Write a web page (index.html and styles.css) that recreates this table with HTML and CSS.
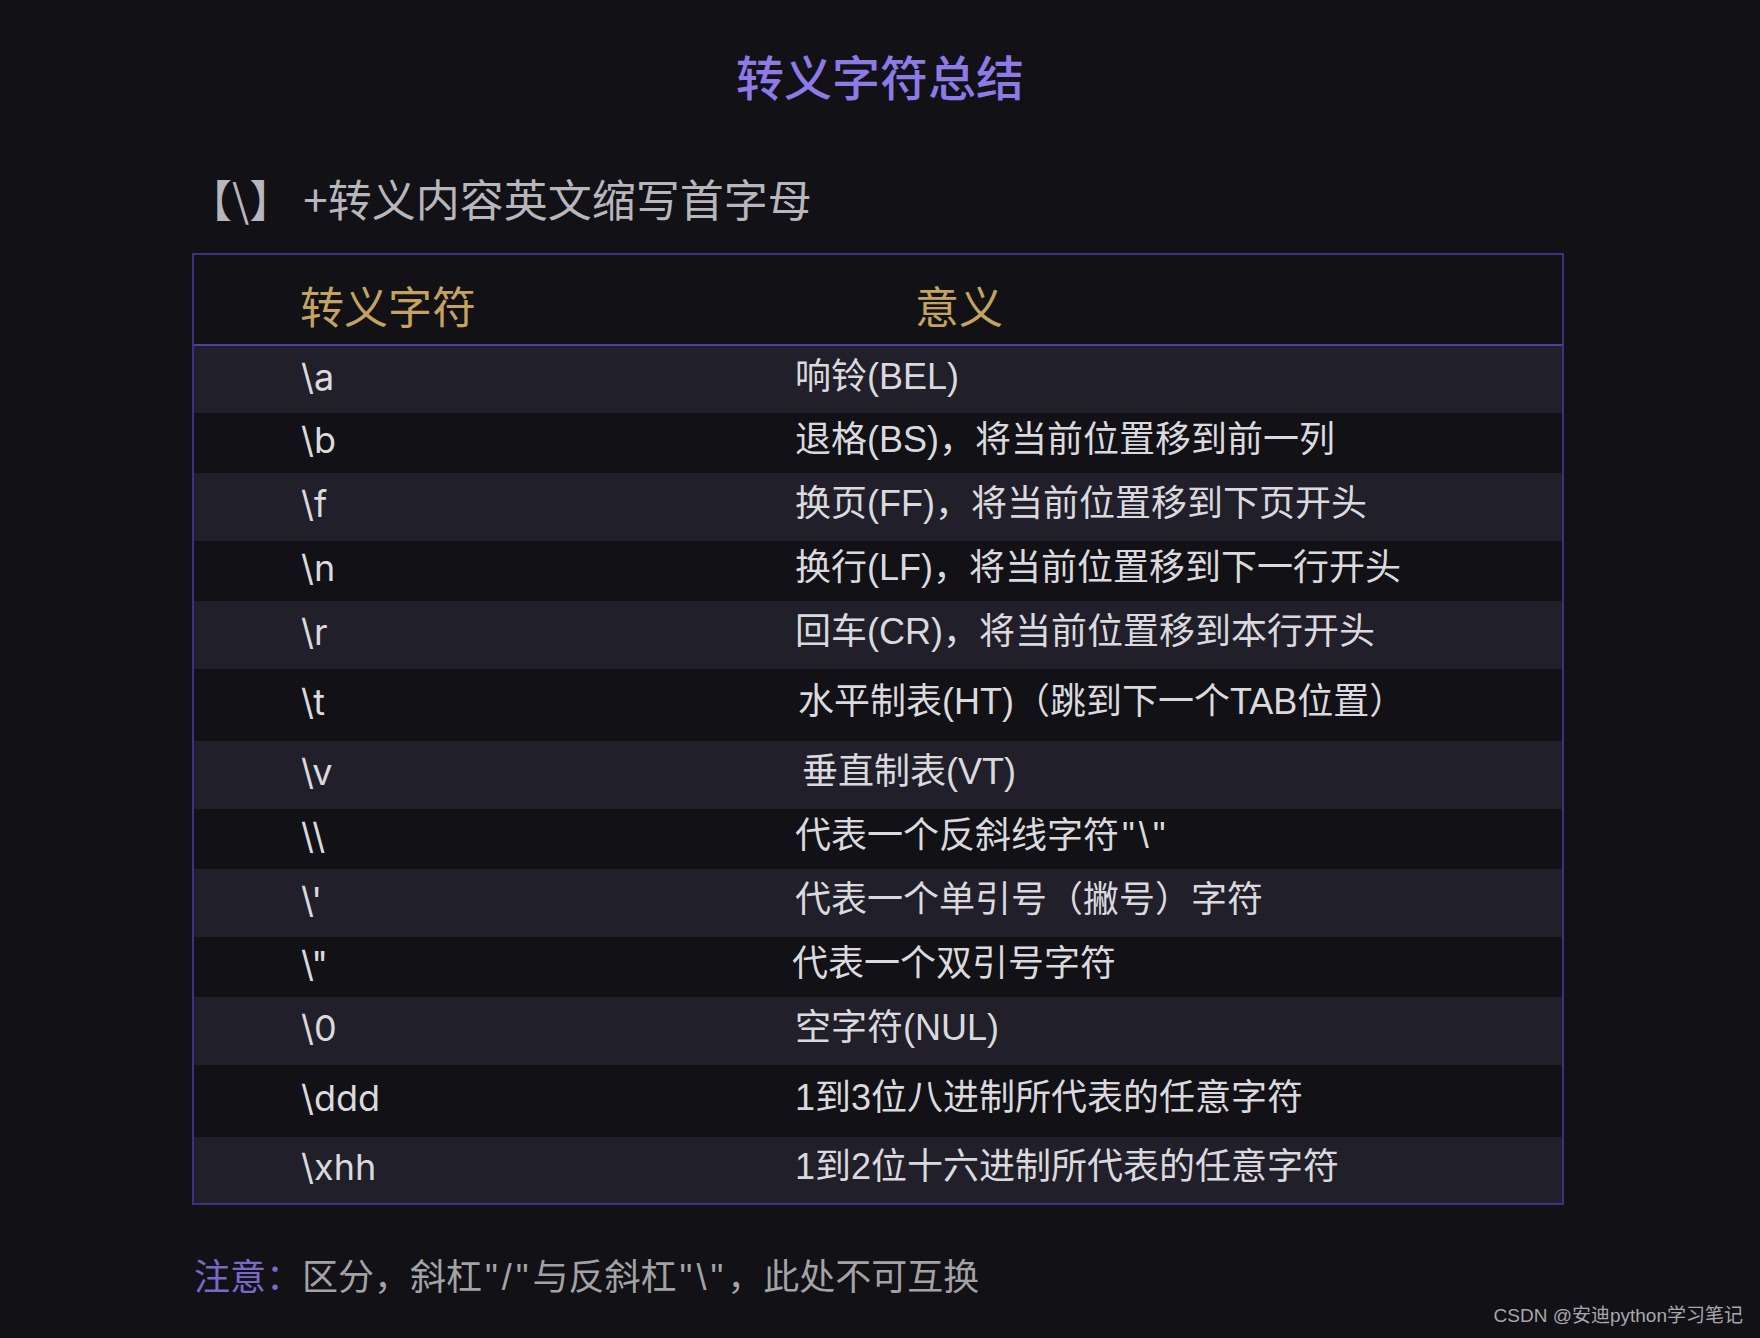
FILE: index.html
```html
<!DOCTYPE html>
<html lang="zh-CN">
<head>
<meta charset="utf-8">
<title>转义字符总结</title>
<link rel="stylesheet" href="styles.css">
</head>
<body>
<div class="page">
  <h1 class="title">转义字符总结</h1>
  <h2 class="subtitle"><span class="bracket">【\】</span>+转义内容英文缩写首字母</h2>

  <div class="table">
    <div class="head">
      <div class="hcell hcode">转义字符</div>
      <div class="hcell hdesc">意义</div>
    </div>
    <div class="row alt h67"><div class="code">\a</div><div class="desc">响铃(BEL)</div></div>
    <div class="row"><div class="code">\b</div><div class="desc">退格(BS)，将当前位置移到前一列</div></div>
    <div class="row alt"><div class="code">\f</div><div class="desc">换页(FF)，将当前位置移到下页开头</div></div>
    <div class="row"><div class="code">\n</div><div class="desc">换行(LF)，将当前位置移到下一行开头</div></div>
    <div class="row alt"><div class="code">\r</div><div class="desc">回车(CR)，将当前位置移到本行开头</div></div>
    <div class="row h72"><div class="code">\t</div><div class="desc shift-3">水平制表(HT)（跳到下一个TAB位置）</div></div>
    <div class="row alt"><div class="code">\v</div><div class="desc shift-7">垂直制表(VT)</div></div>
    <div class="row"><div class="code">\\</div><div class="desc">代表一个反斜线字符<span class="q">"\"</span></div></div>
    <div class="row alt"><div class="code">\'</div><div class="desc">代表一个单引号（撇号）字符</div></div>
    <div class="row"><div class="code">\"</div><div class="desc shift-n3">代表一个双引号字符</div></div>
    <div class="row alt"><div class="code">\0</div><div class="desc">空字符(NUL)</div></div>
    <div class="row h72"><div class="code">\ddd</div><div class="desc">1到3位八进制所代表的任意字符</div></div>
    <div class="row alt h66"><div class="code">\xhh</div><div class="desc">1到2位十六进制所代表的任意字符</div></div>
  </div>

  <p class="note"><span class="note-label">注意：</span>区分，斜杠<span class="q">"/"</span>与反斜杠<span class="q">"\"</span>，此处不可互换</p>

  <div class="watermark">CSDN @安迪python学习笔记</div>
</div>
</body>
</html>
```

FILE: styles.css
```css
html, body {
  margin: 0;
  padding: 0;
  background: #111116;
}

.page {
  position: relative;
  width: 1760px;
  height: 1338px;
  overflow: hidden;
  font-family: "Liberation Sans", "Noto Sans CJK SC", sans-serif;
  background: #111116;
}

.title {
  margin: 0;
  padding-top: 46px;
  text-align: center;
  font-family: "Noto Sans CJK SC", sans-serif;
  font-size: 48px;
  line-height: 58px;
  font-weight: 500;
  color: #8c7ae6;
}

.subtitle {
  margin: 68px 0 0 188px;
  font-family: "Noto Sans CJK SC", "Liberation Sans", sans-serif;
  font-size: 44px;
  line-height: 52px;
  font-weight: 400;
  color: #b6b6bc;
}

.bracket {
  margin-right: 10px;
}

.table {
  margin: 29px 0 0 192px;
  width: 1368px;
  border: 2px solid #3b3282;
  display: flex;
  flex-direction: column;
}

.head {
  display: flex;
  align-items: center;
  height: 89px;
  border-bottom: 2px solid #4a3fa2;
  font-family: "Noto Sans CJK SC", sans-serif;
  font-size: 44px;
  color: #c4a35f;
}

.hcell {
  line-height: 1;
  padding-top: 10px;
}

.hcode {
  width: 614px;
  padding-left: 106px;
  box-sizing: border-box;
}

.hdesc {
  padding-left: 107px;
}

.row {
  display: flex;
  align-items: center;
  height: 60px;
  background: #111116;
  color: #dadade;
}

.row.alt {
  height: 68px;
  background: #21202a;
}

.row.h67 { height: 67px; }
.row.h66 { height: 66px; }
.row.h72 { height: 72px; }

.code {
  width: 601px;
  padding-left: 107px;
  padding-bottom: 6px;
  box-sizing: border-box;
  font-family: "Inter", "Liberation Sans", sans-serif;
  font-size: 36px;
  line-height: 1;
}

.desc {
  font-size: 36px;
  line-height: 1;
  padding-bottom: 6px;
}

.q {
  letter-spacing: 4px;
  padding-left: 3px;
}

.shift-3 { padding-left: 3px; }
.shift-7 { padding-left: 7px; }
.shift-n3 { margin-left: -3px; }

.note {
  margin: 51px 0 0 194px;
  font-size: 36px;
  line-height: 44px;
  color: #a3a3a6;
}

.note-label {
  color: #7b69c9;
}

.watermark {
  position: absolute;
  right: 17px;
  bottom: 10px;
  font-size: 19px;
  line-height: 24px;
  color: #a8a8ac;
}
```
